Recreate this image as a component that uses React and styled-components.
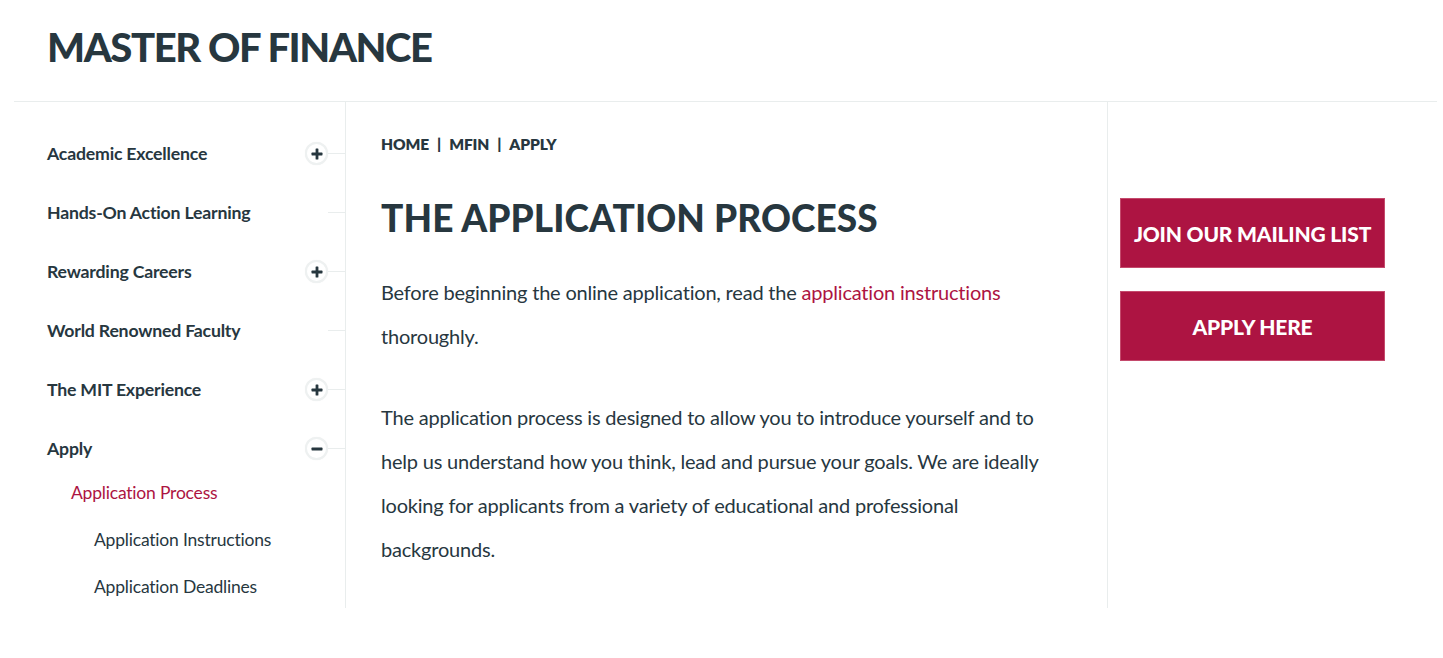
import React from "react";
import styled, { createGlobalStyle } from "styled-components";

const INK = "#27373f";
const RED = "#ad1442";
const RULE = "#e9eded";

const GlobalStyle = createGlobalStyle`
  html, body { margin: 0; padding: 0; background: #fff; }
  body {
    font-family: Lato, "Noto Sans", "Liberation Sans", sans-serif;
    color: ${INK};
    -webkit-font-smoothing: antialiased;
  }
  * { box-sizing: border-box; }
`;

const Page = styled.div`
  padding: 0 6px 0 14px;
`;

const Header = styled.header`
  height: 102px;
  border-bottom: 1px solid ${RULE};
  padding: 22px 0 0 33px;
`;

const SiteTitle = styled.h1`
  margin: 0;
  font-size: 40px;
  line-height: 50px;
  font-weight: 900;
  letter-spacing: -1.4px;
  color: ${INK};
`;

const Body = styled.div`
  display: grid;
  grid-template-columns: 332px 762px 1fr;
  height: 506px;
`;

const Sidebar = styled.nav`
  border-right: 1px solid ${RULE};
  padding: 22px 0 0 33px;
`;

const NavRow = styled.div`
  height: 59px;
  display: flex;
  align-items: center;
  justify-content: space-between;
`;

const NavLabel = styled.span`
  font-size: 17.7px;
  font-weight: 700;
  letter-spacing: -0.2px;
  color: ${INK};
`;

const Connector = styled.div`
  display: flex;
  align-items: center;
`;

const ToggleCircle = styled.span`
  width: 23px;
  height: 23px;
  border-radius: 50%;
  border: 2px solid #eef1f1;
  box-shadow: 0 0 1px rgba(0, 0, 0, 0.08);
  display: flex;
  align-items: center;
  justify-content: center;
  background: #fff;
`;

const Stub = styled.span`
  width: 17px;
  height: 1px;
  background: ${RULE};
`;

const SubList = styled.div`
  margin-top: -9px;
`;

const SubRow = styled.div`
  height: 47px;
  display: flex;
  align-items: center;
  padding-left: ${(p) => p.$indent}px;
  font-size: 17.5px;
  font-weight: 400;
  letter-spacing: -0.2px;
  color: ${(p) => (p.$active ? RED : INK)};
`;

const Main = styled.main`
  border-right: 1px solid ${RULE};
  padding: 32px 0 0 35px;
`;

const Crumbs = styled.div`
  font-size: 15.5px;
  line-height: 20px;
  font-weight: 800;
  letter-spacing: -0.1px;
  display: flex;
  gap: 8px;
  color: ${INK};
`;

const Heading = styled.h2`
  margin: 39px 0 0;
  font-size: 37px;
  line-height: 50px;
  font-weight: 900;
  letter-spacing: 0.1px;
  color: ${INK};
`;

const Para = styled.p`
  margin: ${(p) => p.$top}px 0 0;
  max-width: 672px;
  font-size: 20px;
  line-height: 44px;
  font-weight: 400;
  letter-spacing: -0.2px;
  color: ${INK};
`;

const Link = styled.a`
  color: ${RED};
  text-decoration: none;
`;

const Aside = styled.aside`
  padding: 96px 0 0 12px;
  display: flex;
  flex-direction: column;
  gap: 23px;
`;

const RedButton = styled.a`
  width: 265px;
  height: 70px;
  background: ${RED};
  border: 1px solid #c44a6c;
  color: #fff;
  display: flex;
  align-items: center;
  justify-content: center;
  font-size: 21px;
  font-weight: 900;
  letter-spacing: -0.2px;
  text-decoration: none;
`;

const PlusIcon = ({ minus }) => (
  <svg width="12" height="12" viewBox="0 0 12 12">
    <rect x="0.5" y="4.6" width="11" height="2.8" rx="0.6" fill={INK} />
    {!minus && <rect x="4.6" y="0.5" width="2.8" height="11" rx="0.6" fill={INK} />}
  </svg>
);

const navItems = [
  { label: "Academic Excellence", toggle: "plus" },
  { label: "Hands-On Action Learning" },
  { label: "Rewarding Careers", toggle: "plus" },
  { label: "World Renowned Faculty" },
  { label: "The MIT Experience", toggle: "plus" },
  { label: "Apply", toggle: "minus" },
];

const subItems = [
  { label: "Application Process", indent: 24, active: true },
  { label: "Application Instructions", indent: 47 },
  { label: "Application Deadlines", indent: 47 },
];

export default function App() {
  return (
    <Page>
      <GlobalStyle />
      <Header>
        <SiteTitle>MASTER OF FINANCE</SiteTitle>
      </Header>
      <Body>
        <Sidebar>
          {navItems.map((item) => (
            <NavRow key={item.label}>
              <NavLabel>{item.label}</NavLabel>
              <Connector>
                {item.toggle && (
                  <ToggleCircle>
                    <PlusIcon minus={item.toggle === "minus"} />
                  </ToggleCircle>
                )}
                <Stub />
              </Connector>
            </NavRow>
          ))}
          <SubList>
            {subItems.map((s) => (
              <SubRow key={s.label} $indent={s.indent} $active={s.active}>
                {s.label}
              </SubRow>
            ))}
          </SubList>
        </Sidebar>
        <Main>
          <Crumbs>
            <span>HOME</span>
            <span>|</span>
            <span>MFIN</span>
            <span>|</span>
            <span>APPLY</span>
          </Crumbs>
          <Heading>THE APPLICATION PROCESS</Heading>
          <Para $top={27}>
            Before beginning the online application, read the{" "}
            <Link href="#">application instructions</Link> thoroughly.
          </Para>
          <Para $top={37}>
            The application process is designed to allow you to introduce yourself and to help
            us understand how you think, lead and pursue your goals. We are ideally looking for
            applicants from a variety of educational and professional backgrounds.
          </Para>
        </Main>
        <Aside>
          <RedButton href="#">JOIN OUR MAILING LIST</RedButton>
          <RedButton href="#">APPLY HERE</RedButton>
        </Aside>
      </Body>
    </Page>
  );
}
